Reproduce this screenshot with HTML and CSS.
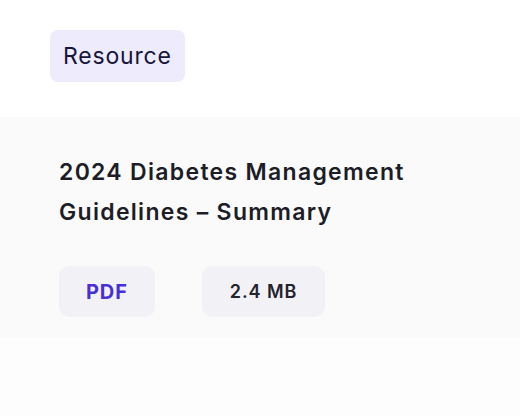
FILE: index.html
```html
<!DOCTYPE html>
<html lang="en">
<head>
    <meta charset="UTF-8">
    <meta name="viewport" content="width=device-width, initial-scale=1.0">
    <title>Resource</title>
    <link rel="stylesheet" href="styles.css">
</head>
<body>
    <div class="top">
        <span class="tag">Resource</span>
    </div>
    <div class="card">
        <h2 class="title">2024 Diabetes Management<br>Guidelines – Summary</h2>
        <div class="chips">
            <span class="chip chip-type">PDF</span>
            <span class="chip chip-size">2.4 MB</span>
        </div>
    </div>
</body>
</html>
```

FILE: styles.css
```css
body {
    margin: 0;
    background: #fdfdfd;
    font-family: Inter, "Noto Sans", sans-serif;
}
.top {
    background: #ffffff;
    padding: 30px 0 35px 50px;
}
.tag {
    display: inline-flex;
    align-items: center;
    height: 52px;
    padding: 0 13px;
    background-color: #eeebfd;
    border-radius: 8px;
    color: #15163a;
    font-size: 23px;
    letter-spacing: 0.8px;
}
.card {
    background-color: #fafafa;
    padding: 35px 0 20px 59px;
}
.title {
    margin: 0;
    font-size: 23px;
    font-weight: 600;
    line-height: 40px;
    letter-spacing: 1.3px;
    color: #1c1d26;
}
.chips {
    display: flex;
    gap: 47px;
    margin-top: 34px;
}
.chip {
    display: inline-flex;
    align-items: center;
    height: 51px;
    padding: 0 28px;
    background-color: #f2f2f6;
    border-radius: 10px;
    font-size: 18px;
    font-weight: 600;
    letter-spacing: 0.9px;
}
.chip-type {
    color: #4a2fd6;
    font-weight: 700;
    font-size: 20px;
    padding: 0 27px;
}
.chip-size {
    color: #23242e;
}
```
